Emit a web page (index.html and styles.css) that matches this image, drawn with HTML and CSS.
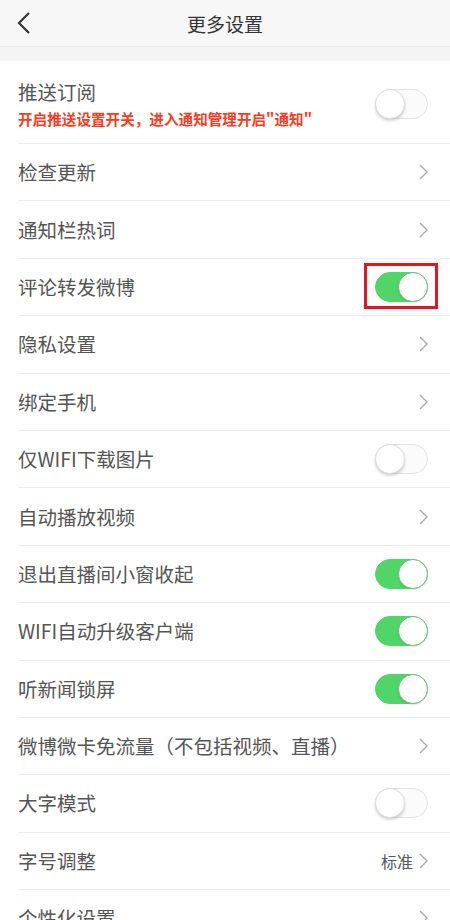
FILE: index.html
```html
<!DOCTYPE html>
<html lang="zh">
<head>
    <meta charset="UTF-8">
    <meta name="viewport" content="width=device-width, initial-scale=1.0">
    <title>更多设置</title>
    <link rel="stylesheet" href="styles.css">
</head>
<body>
    <div class="header">
        <svg class="back" width="14" height="22" viewBox="0 0 14 22"><path d="M12 1 L2 11 L12 21" fill="none" stroke="#333" stroke-width="2.2"/></svg>
        <div class="title">更多设置</div>
    </div>
    <div class="gap"></div>
    <div class="list">
        <div class="row row-tall">
            <div class="texts">
                <div class="label">推送订阅</div>
                <div class="sub">开启推送设置开关，进入通知管理开启"通知"</div>
            </div>
            <div class="switch"></div>
        </div>
        <div class="row"><div class="label">检查更新</div><svg class="arrow" width="9" height="16" viewBox="0 0 9 16"><path d="M1 1 L8 8 L1 15" fill="none" stroke="#aaa" stroke-width="1.4"/></svg></div>
        <div class="row"><div class="label">通知栏热词</div><svg class="arrow" width="9" height="16" viewBox="0 0 9 16"><path d="M1 1 L8 8 L1 15" fill="none" stroke="#aaa" stroke-width="1.4"/></svg></div>
        <div class="row"><div class="label">评论转发微博</div><div class="switch on marked"></div></div>
        <div class="row"><div class="label">隐私设置</div><svg class="arrow" width="9" height="16" viewBox="0 0 9 16"><path d="M1 1 L8 8 L1 15" fill="none" stroke="#aaa" stroke-width="1.4"/></svg></div>
        <div class="row"><div class="label">绑定手机</div><svg class="arrow" width="9" height="16" viewBox="0 0 9 16"><path d="M1 1 L8 8 L1 15" fill="none" stroke="#aaa" stroke-width="1.4"/></svg></div>
        <div class="row"><div class="label">仅WIFI下载图片</div><div class="switch"></div></div>
        <div class="row"><div class="label">自动播放视频</div><svg class="arrow" width="9" height="16" viewBox="0 0 9 16"><path d="M1 1 L8 8 L1 15" fill="none" stroke="#aaa" stroke-width="1.4"/></svg></div>
        <div class="row"><div class="label">退出直播间小窗收起</div><div class="switch on"></div></div>
        <div class="row"><div class="label">WIFI自动升级客户端</div><div class="switch on"></div></div>
        <div class="row"><div class="label">听新闻锁屏</div><div class="switch on"></div></div>
        <div class="row"><div class="label">微博微卡免流量（不包括视频、直播）</div><svg class="arrow" width="9" height="16" viewBox="0 0 9 16"><path d="M1 1 L8 8 L1 15" fill="none" stroke="#aaa" stroke-width="1.4"/></svg></div>
        <div class="row"><div class="label">大字模式</div><div class="switch"></div></div>
        <div class="row"><div class="label">字号调整</div><div class="right"><span class="value">标准</span><svg class="arrow" width="9" height="16" viewBox="0 0 9 16"><path d="M1 1 L8 8 L1 15" fill="none" stroke="#aaa" stroke-width="1.4"/></svg></div></div>
        <div class="row"><div class="label">个性化设置</div><svg class="arrow" width="9" height="16" viewBox="0 0 9 16"><path d="M1 1 L8 8 L1 15" fill="none" stroke="#aaa" stroke-width="1.4"/></svg></div>
    </div>
</body>
</html>
```

FILE: styles.css
```css
body {
    margin: 0;
    padding: 0;
    width: 450px;
    height: 920px;
    overflow: hidden;
    background-color: #fff;
    font-family: "Noto Sans CJK SC", "Noto Sans", sans-serif;
}
.header {
    height: 47px;
    background-color: #f7f7f7;
    border-bottom: 1px solid #e9e9e9;
    box-sizing: border-box;
    display: flex;
    align-items: center;
    justify-content: center;
    position: relative;
}
.back {
    position: absolute;
    left: 17px;
    top: 12px;
}
.title {
    font-size: 19px;
    color: #333;
}
.gap {
    height: 14px;
    background-color: #f4f4f4;
}
.list {
    background-color: #fff;
}
.row {
    height: 57.4px;
    box-sizing: border-box;
    margin-left: 18px;
    padding-right: 22px;
    border-bottom: 1px solid #ececec;
    display: flex;
    align-items: center;
    justify-content: space-between;
}
.row-tall {
    height: 83px;
    padding-top: 3px;
}
.label {
    font-size: 19.5px;
    color: #555;
    line-height: 26px;
}
.sub {
    font-size: 14.6px;
    font-weight: bold;
    color: #ff3a1c;
    line-height: 20px;
    margin-top: 4px;
}
.arrow {
    display: block;
}
.right {
    display: flex;
    align-items: center;
    gap: 6px;
}
.value {
    font-size: 16px;
    color: #555;
}
.switch {
    width: 53px;
    height: 30px;
    box-sizing: border-box;
    border-radius: 15px;
    border: 1px solid #e3e3e3;
    background-color: #fbfbfb;
    position: relative;
}
.switch::before {
    content: "";
    position: absolute;
    left: -1px;
    top: -1px;
    width: 30px;
    height: 30px;
    box-sizing: border-box;
    border-radius: 50%;
    background-color: #fff;
    border: 1px solid #ddd;
    box-shadow: 0 2px 3px rgba(0, 0, 0, 0.18);
}
.switch.on {
    background-color: #4fd666;
    border-color: #4fd666;
}
.switch.on::before {
    left: auto;
    right: -1px;
    border-color: #6bc27a;
    box-shadow: 0 1px 2px rgba(0, 0, 0, 0.12);
}
.marked::after {
    content: "";
    position: absolute;
    left: -12px;
    top: -10px;
    width: 74px;
    height: 46px;
    box-sizing: border-box;
    border: 3px solid #e6141e;
}
```
